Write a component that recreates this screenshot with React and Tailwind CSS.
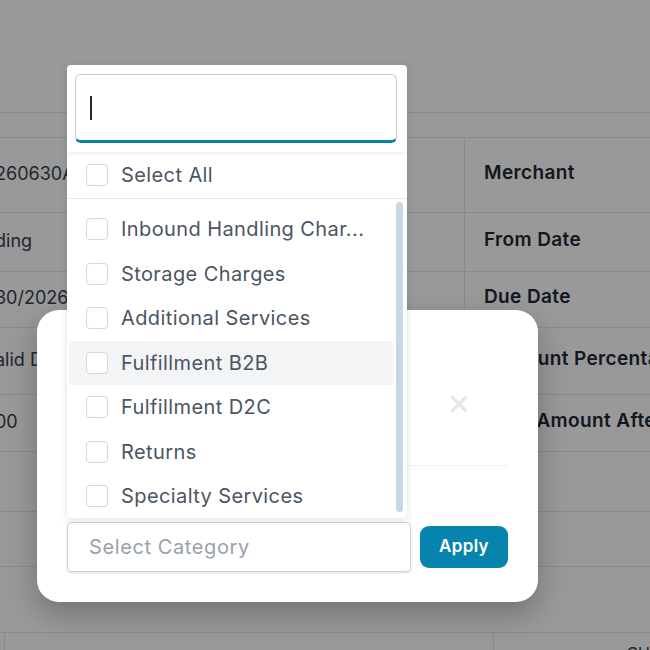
import { X } from "lucide-react";

const rows = [
  { h: "h-[75px]", value: "260630A", label: "Merchant" },
  { h: "h-[59px]", value: "ding", label: "From Date" },
  { h: "h-[56px]", value: "30/2026", label: "Due Date" },
  { h: "h-[67px]", value: "alid D", label: "Discount Percentage" },
  { h: "h-[57px]", value: "00", label: "Total Amount After Discount" },
  { h: "h-[60px]", value: "", label: "" },
  { h: "h-[55px]", value: "", label: "" },
];

const categories = [
  "Inbound Handling Char...",
  "Storage Charges",
  "Additional Services",
  "Fulfillment B2B",
  "Fulfillment D2C",
  "Returns",
  "Specialty Services",
  "Packaging Materials",
];

function Box() {
  return <span className="w-[22px] h-[22px] shrink-0 rounded-[4px] border border-[#d4d8de] bg-white" />;
}

export default function App() {
  return (
    <div className="relative w-[650px] h-[650px] overflow-hidden bg-white font-['Inter',sans-serif]">
      {/* page behind */}
      <div className="flex flex-col">
        <div className="h-[112px]" />
        <div className="h-[26px] border-y border-[#e5e7eb]" />
        {rows.map((r, i) => (
          <div key={i} className={`${r.h} flex border-b border-[#e5e7eb]`}>
            <div className="w-[465px] flex items-center border-r border-[#e5e7eb] pb-[4px]">
              <span className="-ml-[5px] text-[18px] text-[#374151] whitespace-nowrap">{r.value}</span>
            </div>
            <div className="flex-1 flex items-center pl-[19px] pb-[4px] overflow-hidden">
              <span className="text-[19px] tracking-[0.02em] font-semibold text-[#1f2937] whitespace-nowrap">{r.label}</span>
            </div>
          </div>
        ))}
        <div className="h-[66px] border-b border-[#e5e7eb]" />
        <div className="h-[40px] flex">
          <div className="w-[5px] border-r border-[#e5e7eb]" />
          <div className="w-[490px] border-r border-[#e5e7eb]" />
          <div className="flex-1 pl-[132px] pt-[8px] text-[16px] text-[#374151]">CH</div>
        </div>
      </div>

      {/* dim */}
      <div className="absolute inset-0 bg-black/40" />

      {/* modal */}
      <div className="absolute left-[37px] top-[310px] w-[501px] bg-white rounded-[22px] px-[30px] pb-[30px] shadow-[0_12px_30px_rgba(0,0,0,0.25)]">
        <div className="h-[156px] flex justify-between items-start pt-[81px] border-b border-[#eef1f5]">
          <span className="text-[20px] font-semibold text-[#111827]">Add Category</span>
          <X size={26} strokeWidth={3.2} className="text-[#e6e7ea] mr-[36px]" />
        </div>
        <div className="h-[56px] flex items-center text-[14px] text-[#9ca3af]">Category</div>
        <div className="flex items-center gap-[9px]">
          <div className="w-[344px] h-[50px] border border-[#cfd3d8] rounded-[4px] flex items-center pl-[21px] text-[20px] tracking-[0.03em] text-[#9aa1ac] shadow-sm">
            Select Category
          </div>
          <button className="w-[88px] h-[42px] rounded-[9px] bg-[#0784ad] text-white text-[17px] tracking-[0.02em] font-semibold">
            Apply
          </button>
        </div>
      </div>

      {/* dropdown */}
      <div className="absolute left-[67px] top-[65px] w-[340px] h-[453px] bg-white rounded-[4px] shadow-[0_2px_8px_rgba(0,0,0,0.12)] flex flex-col overflow-hidden">
        <div className="pl-[8px] pr-[10px] pt-[9px] pb-[9px] shadow-[0_2px_4px_rgba(0,0,0,0.07)] relative z-10">
          <div className="h-[69px] rounded-[6px] border border-[#c7c9cc] border-b-[3px] border-b-[#0a80a8] flex items-center pl-[14px]">
            <span className="w-[2px] h-[24px] bg-[#1f2937]" />
          </div>
        </div>
        <div className="h-[47px] shrink-0 flex items-center gap-[13px] pl-[19px] border-b border-[#e5e8ec] text-[20px] tracking-[0.02em] text-[#4b5563]">
          <Box />
          <span>Select All</span>
        </div>
        <div className="flex-1 flex min-h-0 pl-[2px]">
          <div className="flex-1 pt-[8px] overflow-hidden">
            {categories.map((c) => (
              <div
                key={c}
                className={`h-[44.5px] flex items-center gap-[13px] pl-[17px] text-[20px] tracking-[0.02em] text-[#4b5563] whitespace-nowrap ${
                  c === "Fulfillment B2B" ? "bg-[#f3f4f6]" : ""
                }`}
              >
                <Box />
                <span>{c}</span>
              </div>
            ))}
          </div>
          <div className="w-[7px] ml-[3px] mr-[4px] mt-[3px] mb-[6px] rounded-full bg-[#c9d6e3]" />
        </div>
      </div>
    </div>
  );
}
